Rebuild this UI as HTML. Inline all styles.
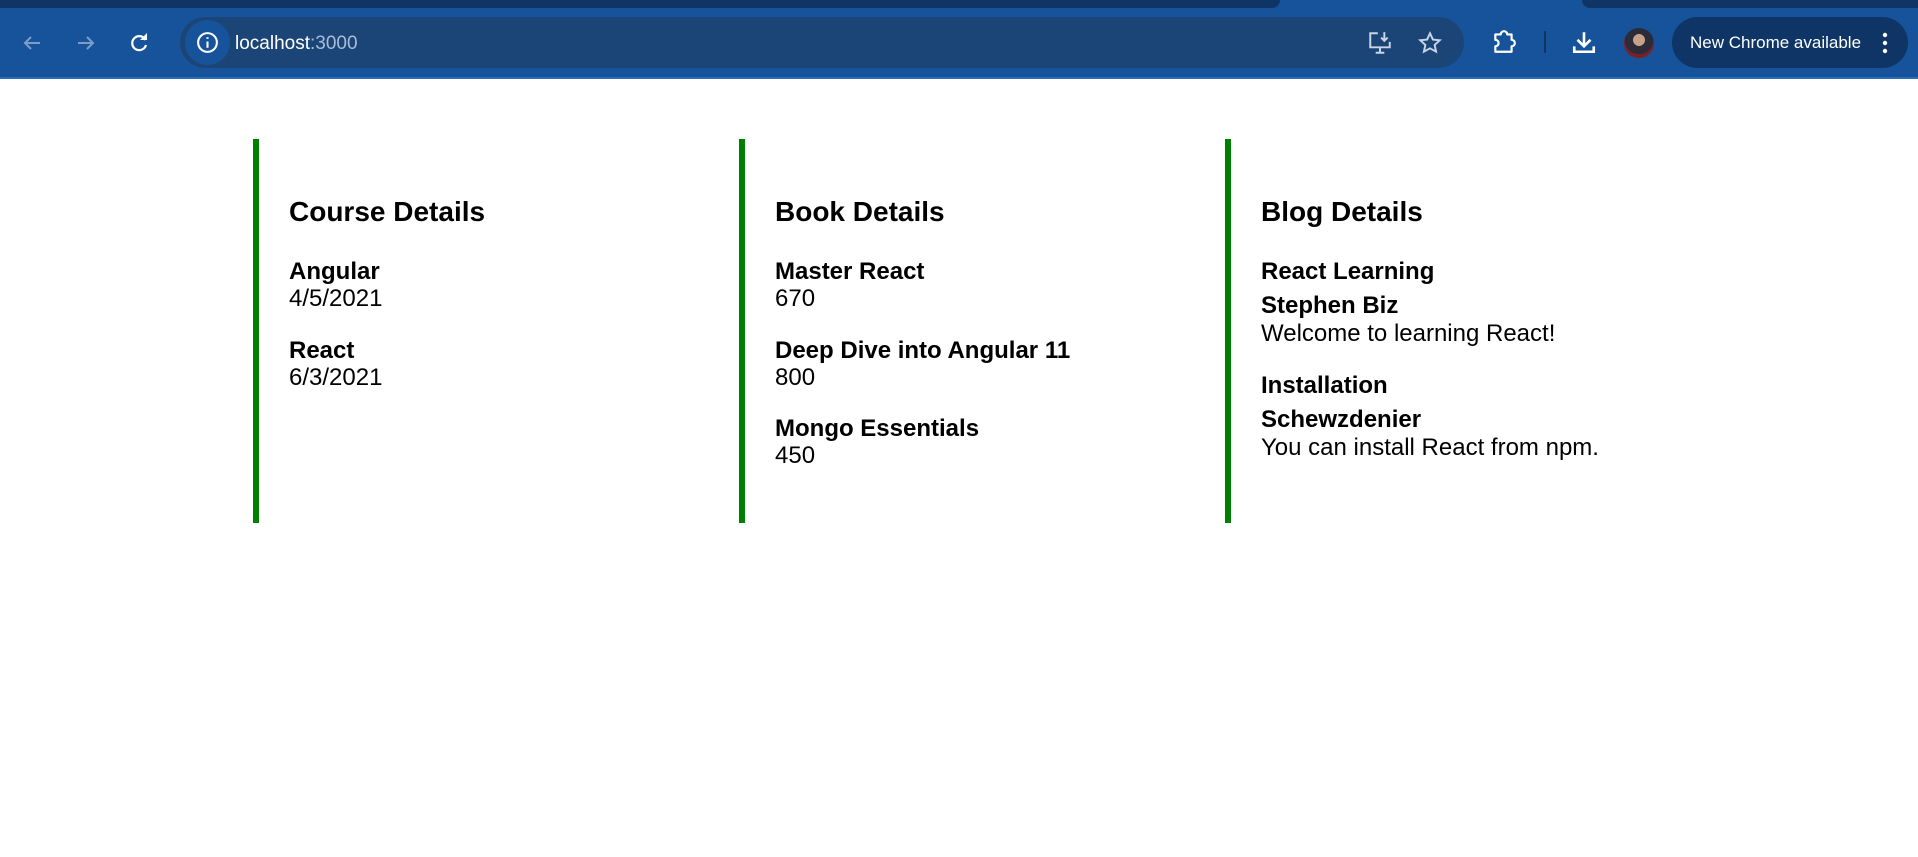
<!DOCTYPE html>
<html><head><meta charset="utf-8"><style>
*{margin:0;padding:0;box-sizing:border-box}
body{width:1918px;height:857px;background:#fff;position:relative;overflow:hidden;font-family:"Liberation Sans",Arial,sans-serif;color:#000}
.bar{position:absolute;left:0;top:0;width:1918px;height:79px;background:#16539a;border-bottom:2px solid #2a6bb5}
.top1{position:absolute;left:0;top:0;width:1280px;height:8px;background:#0e3566;border-bottom-right-radius:8px}
.top2{position:absolute;left:1582px;top:0;width:336px;height:8px;background:#0e3566;border-bottom-left-radius:8px}
.pill{position:absolute;left:180px;top:17px;width:1284px;height:51px;border-radius:26px;background:#1b4577}
.info{position:absolute;left:185px;top:20px;width:45px;height:45px;border-radius:50%;background:#16539a}
.url{position:absolute;left:235px;top:33px;font-size:19px;color:#fff}
.url span{color:#a9bcd6}
.nc{position:absolute;left:1672px;top:17px;width:236px;height:51px;border-radius:26px;background:#0e3566;color:#fff;font-size:17px;line-height:51px;padding-left:18px}
.av{position:absolute;left:1624px;top:28px;width:30px;height:30px;border-radius:50%;background:radial-gradient(circle at 50% 40%,#c9a08a 0 25%,#2b2b3a 26% 60%,#7a1f24 61%)}
.col{position:absolute;top:139px;width:6px;height:384px;background:#008000}
.t{position:absolute;font-size:24px;line-height:28px;white-space:nowrap}
.b{font-weight:bold}
.h{font-size:28px;line-height:32px;font-weight:bold}
svg{position:absolute}
</style></head><body>
<div class="bar">
<div class="top1"></div><div class="top2"></div>
<svg style="left:20px;top:31px" width="24" height="24" viewBox="0 0 24 24"><path d="M20 12H5M11 6l-6 6 6 6" stroke="#7d9dc8" stroke-width="2" fill="none"/></svg>
<svg style="left:74px;top:31px" width="24" height="24" viewBox="0 0 24 24"><path d="M4 12h15M13 6l6 6-6 6" stroke="#7d9dc8" stroke-width="2" fill="none"/></svg>
<svg style="left:127px;top:31px" width="24" height="24" viewBox="0 0 24 24"><path d="M18.5 9A7 7 0 1 0 19 14" stroke="#fff" stroke-width="2.2" fill="none"/><path d="M13 9h7V2z" fill="#fff"/></svg>
<div class="pill"></div>
<div class="info"></div>
<svg style="left:195px;top:30px" width="25" height="25" viewBox="0 0 24 24"><circle cx="12" cy="12" r="9" stroke="#fff" stroke-width="2" fill="none"/><path d="M12 11v6M12 7v1.5" stroke="#fff" stroke-width="2"/></svg>
<div class="url">localhost<span>:3000</span></div>
<svg style="left:1367px;top:30px" width="26" height="26" viewBox="0 0 24 24"><path d="M10 3H3v13h18v-5M8 21h8M12 16v5M16 2v8M13 7l3 3 3-3" stroke="#c9d5e6" stroke-width="1.8" fill="none"/></svg>
<svg style="left:1417px;top:30px" width="26" height="26" viewBox="0 0 24 24"><path d="M12 3l2.7 5.8 6.3.7-4.7 4.3 1.3 6.2L12 16.9 6.4 20l1.3-6.2L3 9.5l6.3-.7z" stroke="#c9d5e6" stroke-width="1.8" fill="none"/></svg>
<svg style="left:1491px;top:29px" width="26" height="26" viewBox="0 0 24 24"><path d="M4 5h5a3 3 0 0 1 6 0h4v5a3 3 0 0 1 0 6v5H4v-5a3 3 0 0 0 0-6z" stroke="#fff" stroke-width="2" fill="none" stroke-linejoin="round"/></svg>
<div style="position:absolute;left:1544px;top:31px;width:2px;height:22px;background:#0e3566"></div>
<svg style="left:1571px;top:29px" width="26" height="26" viewBox="0 0 24 24"><path d="M12 3v12M6 10l6 6 6-6M3 16v5h18v-5" stroke="#fff" stroke-width="2.4" fill="none"/></svg>
<div class="av"></div>
<div class="nc">New Chrome available</div>
<svg style="left:1878px;top:30px" width="14" height="26" viewBox="0 0 14 26"><circle cx="7" cy="5" r="2.2" fill="#fff"/><circle cx="7" cy="13" r="2.2" fill="#fff"/><circle cx="7" cy="21" r="2.2" fill="#fff"/></svg>
</div>

<div class="col" style="left:253px"></div>
<div class="col" style="left:739px"></div>
<div class="col" style="left:1225px"></div>

<div class="t h" style="left:289px;top:196px">Course Details</div>
<div class="t b" style="left:289px;top:258px">Angular</div>
<div class="t" style="left:289px;top:285px">4/5/2021</div>
<div class="t b" style="left:289px;top:337px">React</div>
<div class="t" style="left:289px;top:364px">6/3/2021</div>

<div class="t h" style="left:775px;top:196px">Book Details</div>
<div class="t b" style="left:775px;top:258px">Master React</div>
<div class="t" style="left:775px;top:285px">670</div>
<div class="t b" style="left:775px;top:337px">Deep Dive into Angular 11</div>
<div class="t" style="left:775px;top:364px">800</div>
<div class="t b" style="left:775px;top:415px">Mongo Essentials</div>
<div class="t" style="left:775px;top:442px">450</div>

<div class="t h" style="left:1261px;top:196px">Blog Details</div>
<div class="t b" style="left:1261px;top:258px">React Learning</div>
<div class="t b" style="left:1261px;top:292px">Stephen Biz</div>
<div class="t" style="left:1261px;top:320px">Welcome to learning React!</div>
<div class="t b" style="left:1261px;top:372px">Installation</div>
<div class="t b" style="left:1261px;top:406px">Schewzdenier</div>
<div class="t" style="left:1261px;top:434px">You can install React from npm.</div>
</body></html>
